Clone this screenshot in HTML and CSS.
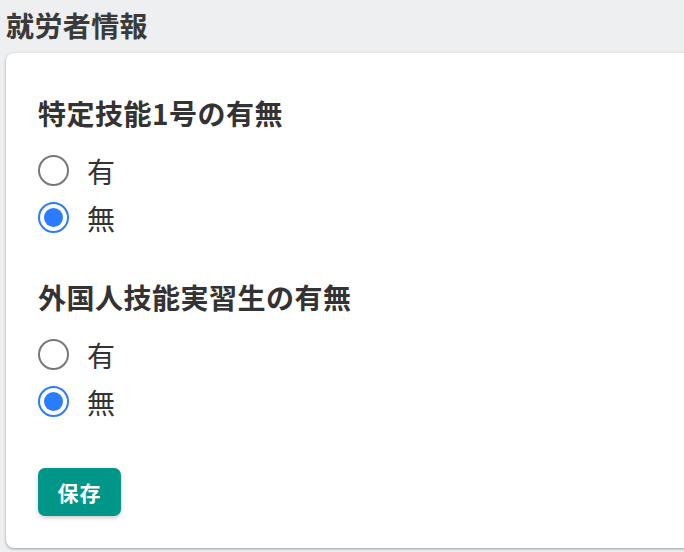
FILE: index.html
```html
<!DOCTYPE html>
<html lang="ja">
<head>
<meta charset="utf-8">
<link rel="stylesheet" href="styles.css">
</head>
<body>
<h1 class="page-title">就労者情報</h1>
<div class="card">
  <div class="group">
    <h2 class="group-title">特定技能1号の有無</h2>
    <div class="options">
      <label class="option"><span class="radio"></span><span class="label">有</span></label>
      <label class="option"><span class="radio checked"></span><span class="label">無</span></label>
    </div>
  </div>
  <div class="group">
    <h2 class="group-title">外国人技能実習生の有無</h2>
    <div class="options">
      <label class="option"><span class="radio"></span><span class="label">有</span></label>
      <label class="option"><span class="radio checked"></span><span class="label">無</span></label>
    </div>
  </div>
  <button class="save-btn">保存</button>
</div>
</body>
</html>
```
FILE: styles.css
```css
* { box-sizing: border-box; }
html, body { margin: 0; padding: 0; }
body {
  background: #eeeff1;
  font-family: "Noto Sans CJK JP", "Noto Sans", sans-serif;
  color: #333;
  overflow: hidden;
  height: 552px;
}
.page-title {
  margin: 0;
  padding: 5px 0 0 6px;
  font-size: 28px;
  line-height: 40px;
  font-weight: 700;
  letter-spacing: 0.4px;
  color: #3a3a3a;
}
.card {
  margin: 8px 0 0 6px;
  width: 690px;
  background: #fff;
  border-radius: 8px;
  box-shadow: 0 1px 3px rgba(0,0,0,0.35);
  padding: 40px 32px 32px 32px;
  display: flex;
  flex-direction: column;
  align-items: flex-start;
}
.group { display: flex; flex-direction: column; }
.group + .group { margin-top: 36px; }
.group-title {
  margin: 0;
  font-size: 28px;
  line-height: 40px;
  font-weight: 700;
  letter-spacing: 0.5px;
  color: #333;
}
.options {
  margin-top: 14px;
  display: flex;
  flex-direction: column;
}
.option {
  display: flex;
  align-items: center;
  height: 47px;
}
.radio {
  width: 31px;
  height: 31px;
  border-radius: 50%;
  border: 2px solid #777;
  display: flex;
  align-items: center;
  justify-content: center;
  margin-right: 18px;
}
.radio.checked { border-color: #2a7bff; }
.radio.checked::after {
  content: "";
  width: 19px;
  height: 19px;
  border-radius: 50%;
  background: #2a7bff;
}
.label {
  font-size: 28px;
  line-height: 40px;
  color: #333;
}
.save-btn {
  margin-top: 43px;
  width: 83px;
  height: 48px;
  border: none;
  border-radius: 7px;
  background: #009688;
  color: #fff;
  font-family: inherit;
  font-size: 21px;
  font-weight: 700;
  letter-spacing: 1px;
  box-shadow: 0 2px 4px rgba(0,0,0,0.2);
  padding: 0;
}
```
